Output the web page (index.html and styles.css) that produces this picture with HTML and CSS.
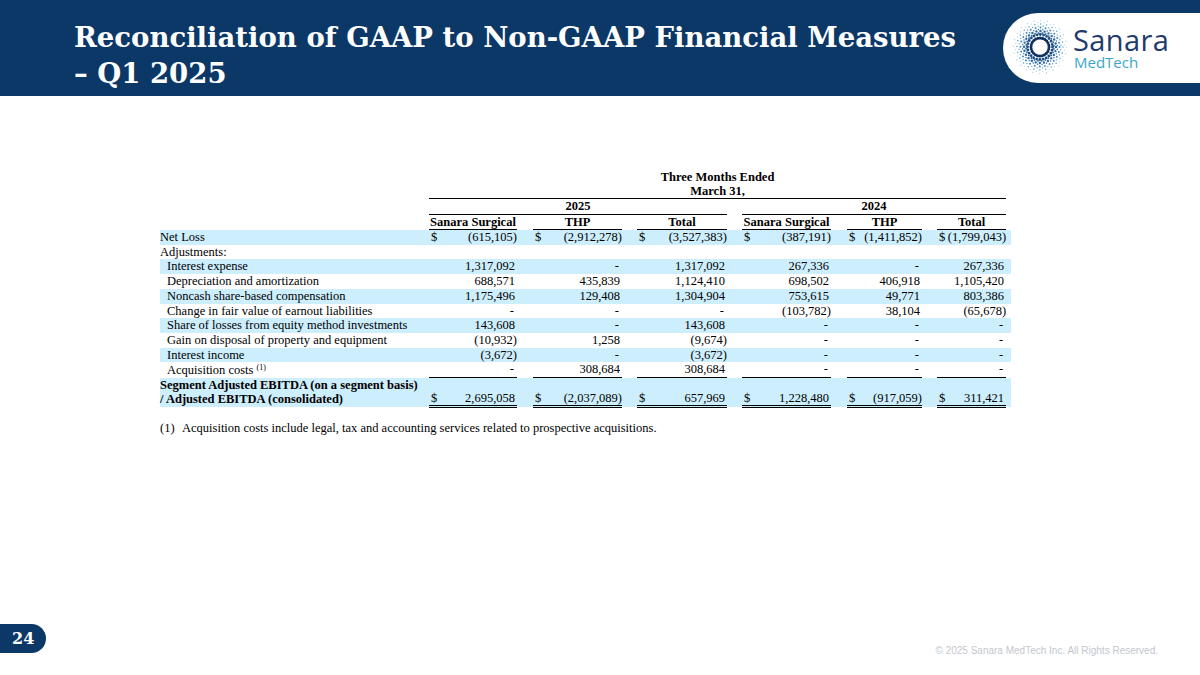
FILE: index.html
```html
<!DOCTYPE html>
<html lang="en">
<head>
<meta charset="utf-8">
<title>Reconciliation of GAAP to Non-GAAP Financial Measures – Q1 2025</title>
<link rel="stylesheet" href="styles.css">
</head>
<body>
<div class="slide">
  <header class="topbar">
    <h1 class="title">Reconciliation of GAAP to Non-GAAP Financial Measures<br>– Q1 2025</h1>
    <div class="logo">
      <svg class="logo-mark" width="58" height="58" viewBox="-29 -29 58 58" aria-hidden="true">
        <g fill="none" stroke-linecap="round">
          <circle r="9" stroke="#0f2f5f" stroke-width="3.1" stroke-dasharray="0 2.3562"/>
          <circle r="12.5" stroke="#1a4a82" stroke-width="2.8" stroke-dasharray="0 3.2725"/>
          <circle r="16" stroke="#2b68a0" stroke-width="2.4" stroke-dasharray="0 4.1888"/>
          <circle r="19.5" stroke="#4689bb" stroke-width="2.0" stroke-dasharray="0 5.1051"/>
          <circle r="23" stroke="#67a9d0" stroke-width="1.6" stroke-dasharray="0 6.0214"/>
          <circle r="26.5" stroke="#98c8e1" stroke-width="1.2" stroke-dasharray="0 6.9377"/>
          <g transform="rotate(7.5)">
            <circle r="14" stroke="#235d96" stroke-width="1.8" stroke-dasharray="0 3.6652"/>
            <circle r="17.5" stroke="#3b7db2" stroke-width="1.5" stroke-dasharray="0 4.5815"/>
            <circle r="21" stroke="#5a9cc8" stroke-width="1.3" stroke-dasharray="0 5.4978"/>
            <circle r="24.5" stroke="#88bedb" stroke-width="1.0" stroke-dasharray="0 6.4141"/>
          </g>
        </g>
      </svg>
      <div class="logo-words">
        <span class="logo-name">Sanara</span>
        <span class="logo-sub">MedTech</span>
      </div>
    </div>
  </header>

  <main class="content">
    <table class="recon">
      <colgroup>
        <col class="c-label">
        <col class="c-g88"><col class="c-sp16">
        <col class="c-g89"><col class="c-sp15">
        <col class="c-g90"><col class="c-sp15">
        <col class="c-g89"><col class="c-sp16">
        <col class="c-g75"><col class="c-sp15">
        <col class="c-g69">
        <col class="c-end">
      </colgroup>
      <thead>
        <tr>
          <td></td>
          <th colspan="11" class="hd-top">Three Months Ended<br>March 31,</th>
          <td></td>
        </tr>
        <tr>
          <td></td>
          <th colspan="5" class="hd-line">2025</th>
          <td></td>
          <th colspan="5" class="hd-line">2024</th>
          <td></td>
        </tr>
        <tr>
          <td></td>
          <th class="hd-line">Sanara Surgical</th><td></td>
          <th class="hd-line">THP</th><td></td>
          <th class="hd-line">Total</th><td></td>
          <th class="hd-line">Sanara Surgical</th><td></td>
          <th class="hd-line">THP</th><td></td>
          <th class="hd-line">Total</th>
          <td></td>
        </tr>
      </thead>
      <tbody>
        <tr class="band">
          <td class="lbl">Net Loss</td>
          <td class="v"><span class="cur">$</span>(615,105)</td><td></td>
          <td class="v"><span class="cur">$</span>(2,912,278)</td><td></td>
          <td class="v"><span class="cur">$</span>(3,527,383)</td><td></td>
          <td class="v"><span class="cur">$</span>(387,191)</td><td></td>
          <td class="v"><span class="cur">$</span>(1,411,852)</td><td></td>
          <td class="v"><span class="cur">$</span>(1,799,043)</td>
          <td></td>
        </tr>
        <tr>
          <td class="lbl">Adjustments:</td>
          <td></td><td></td><td></td><td></td><td></td><td></td><td></td><td></td><td></td><td></td><td></td><td></td>
        </tr>
        <tr class="band">
          <td class="lbl ind">Interest expense</td>
          <td class="v pos">1,317,092</td><td></td>
          <td class="v dash">-</td><td></td>
          <td class="v pos">1,317,092</td><td></td>
          <td class="v pos">267,336</td><td></td>
          <td class="v dash">-</td><td></td>
          <td class="v pos">267,336</td>
          <td></td>
        </tr>
        <tr>
          <td class="lbl ind">Depreciation and amortization</td>
          <td class="v pos">688,571</td><td></td>
          <td class="v pos">435,839</td><td></td>
          <td class="v pos">1,124,410</td><td></td>
          <td class="v pos">698,502</td><td></td>
          <td class="v pos">406,918</td><td></td>
          <td class="v pos">1,105,420</td>
          <td></td>
        </tr>
        <tr class="band">
          <td class="lbl ind">Noncash share-based compensation</td>
          <td class="v pos">1,175,496</td><td></td>
          <td class="v pos">129,408</td><td></td>
          <td class="v pos">1,304,904</td><td></td>
          <td class="v pos">753,615</td><td></td>
          <td class="v pos">49,771</td><td></td>
          <td class="v pos">803,386</td>
          <td></td>
        </tr>
        <tr>
          <td class="lbl ind">Change in fair value of earnout liabilities</td>
          <td class="v dash">-</td><td></td>
          <td class="v dash">-</td><td></td>
          <td class="v dash">-</td><td></td>
          <td class="v">(103,782)</td><td></td>
          <td class="v pos">38,104</td><td></td>
          <td class="v">(65,678)</td>
          <td></td>
        </tr>
        <tr class="band">
          <td class="lbl ind">Share of losses from equity method investments</td>
          <td class="v pos">143,608</td><td></td>
          <td class="v dash">-</td><td></td>
          <td class="v pos">143,608</td><td></td>
          <td class="v dash">-</td><td></td>
          <td class="v dash">-</td><td></td>
          <td class="v dash">-</td>
          <td></td>
        </tr>
        <tr>
          <td class="lbl ind">Gain on disposal of property and equipment</td>
          <td class="v">(10,932)</td><td></td>
          <td class="v pos">1,258</td><td></td>
          <td class="v">(9,674)</td><td></td>
          <td class="v dash">-</td><td></td>
          <td class="v dash">-</td><td></td>
          <td class="v dash">-</td>
          <td></td>
        </tr>
        <tr class="band">
          <td class="lbl ind">Interest income</td>
          <td class="v">(3,672)</td><td></td>
          <td class="v dash">-</td><td></td>
          <td class="v">(3,672)</td><td></td>
          <td class="v dash">-</td><td></td>
          <td class="v dash">-</td><td></td>
          <td class="v dash">-</td>
          <td></td>
        </tr>
        <tr>
          <td class="lbl ind">Acquisition costs <sup>(1)</sup></td>
          <td class="v dash ul">-</td><td></td>
          <td class="v pos ul">308,684</td><td></td>
          <td class="v pos ul">308,684</td><td></td>
          <td class="v dash ul">-</td><td></td>
          <td class="v dash ul">-</td><td></td>
          <td class="v dash ul">-</td>
          <td></td>
        </tr>
        <tr class="band total">
          <td class="lbl">Segment Adjusted EBITDA (on a segment basis)<br>/ Adjusted EBITDA (consolidated)</td>
          <td class="v pos dbl"><span class="cur">$</span>2,695,058</td><td></td>
          <td class="v dbl"><span class="cur">$</span>(2,037,089)</td><td></td>
          <td class="v pos dbl"><span class="cur">$</span>657,969</td><td></td>
          <td class="v pos dbl"><span class="cur">$</span>1,228,480</td><td></td>
          <td class="v dbl"><span class="cur">$</span>(917,059)</td><td></td>
          <td class="v pos dbl"><span class="cur">$</span>311,421</td>
          <td></td>
        </tr>
      </tbody>
    </table>
    <p class="footnote"><span class="fn-num">(1)</span>Acquisition costs include legal, tax and accounting services related to prospective acquisitions.</p>
  </main>

  <footer class="bottombar">
    <div class="page-num">24</div>
    <div class="copyright">© 2025 Sanara MedTech Inc. All Rights Reserved.</div>
  </footer>
</div>
</body>
</html>
```

FILE: styles.css
```css
html, body {
  margin: 0;
  padding: 0;
  background: #ffffff;
}

.slide {
  width: 1200px;
  height: 675px;
  display: flex;
  flex-direction: column;
  overflow: hidden;
  background: #ffffff;
}

/* ---------- header ---------- */
.topbar {
  height: 96px;
  flex: 0 0 96px;
  background: #0b3867;
  display: flex;
  align-items: flex-start;
}

.title {
  margin: 0;
  padding: 19px 0 0 74px;
  color: #ffffff;
  font-family: "DejaVu Serif", "Liberation Serif", serif;
  font-weight: 700;
  font-size: 27.5px;
  line-height: 36px;
  letter-spacing: 0;
}

.logo {
  margin-left: auto;
  margin-top: 13px;
  width: 197px;
  height: 70px;
  background: #ffffff;
  border-radius: 35px 0 0 35px;
  display: flex;
  align-items: center;
  box-sizing: border-box;
  padding-left: 8px;
}

.logo-mark {
  flex: 0 0 58px;
  margin-right: 4px;
  position: relative;
  top: -1px;
}

.logo-words {
  display: flex;
  flex-direction: column;
  font-family: "Open Sans", "Liberation Sans", sans-serif;
  position: relative;
  top: -1px;
}

.logo-name {
  color: #1e3b6c;
  font-size: 29px;
  line-height: 30px;
  font-weight: 400;
  letter-spacing: 0.4px;
}

.logo-sub {
  color: #3aa6c9;
  font-size: 15px;
  line-height: 15px;
  font-weight: 400;
  margin-left: 1px;
}

/* ---------- content ---------- */
.content {
  flex: 1 1 auto;
  padding: 74px 0 0 160px;
}

.recon {
  width: 851px;
  table-layout: fixed;
  border-collapse: collapse;
  font-family: "Liberation Serif", "Times New Roman", serif;
  font-size: 12.5px;
  line-height: 14.7px;
  color: #000000;
}

.c-label { width: 269px; }
.c-g88 { width: 88px; }
.c-g89 { width: 89px; }
.c-g90 { width: 90px; }
.c-g75 { width: 75px; }
.c-g69 { width: 69px; }
.c-sp15 { width: 15px; }
.c-sp16 { width: 16px; }
.c-end { width: 5px; }

.recon td,
.recon th {
  padding: 0;
  white-space: nowrap;
}

.recon th {
  font-weight: 700;
  text-align: center;
}

.hd-top {
  line-height: 14px;
  border-bottom: 1px solid #000000;
}

.hd-line {
  border-bottom: 1px solid #000000;
  line-height: 14.5px;
}

.band td {
  background: #cdeefc;
}

.lbl {
  text-align: left;
}

.lbl.ind {
  padding-left: 7px;
}

.lbl sup {
  font-size: 8px;
  line-height: 0;
  vertical-align: 4px;
}

.v {
  text-align: right;
}

.v.pos {
  padding-right: 2px;
}

.v.dash {
  padding-right: 3px;
}

.cur {
  float: left;
  padding-left: 2px;
}

.ul {
  border-bottom: 1px solid #000000;
}

.total .lbl {
  font-weight: 700;
}

.total .v {
  vertical-align: bottom;
}

.dbl {
  border-bottom: 3px double #000000;
}

.footnote {
  margin: 13px 0 0 0;
  font-family: "Liberation Serif", "Times New Roman", serif;
  font-size: 12.5px;
  line-height: 14px;
  color: #000000;
}

.fn-num {
  display: inline-block;
  width: 22px;
}

/* ---------- footer ---------- */
.bottombar {
  flex: 0 0 auto;
  display: flex;
  align-items: flex-end;
  justify-content: space-between;
  padding-bottom: 18px;
}

.page-num {
  width: 46px;
  height: 29px;
  background: #0b3867;
  border-radius: 0 15px 15px 0;
  color: #ffffff;
  font-family: "DejaVu Serif", "Liberation Serif", serif;
  font-weight: 700;
  font-size: 16px;
  line-height: 29px;
  box-sizing: border-box;
  padding-left: 12px;
  margin-bottom: 4px;
}

.copyright {
  font-family: "Liberation Sans", Arial, sans-serif;
  font-size: 10px;
  line-height: 12px;
  color: #c3c7cf;
  margin-right: 42px;
}
```
